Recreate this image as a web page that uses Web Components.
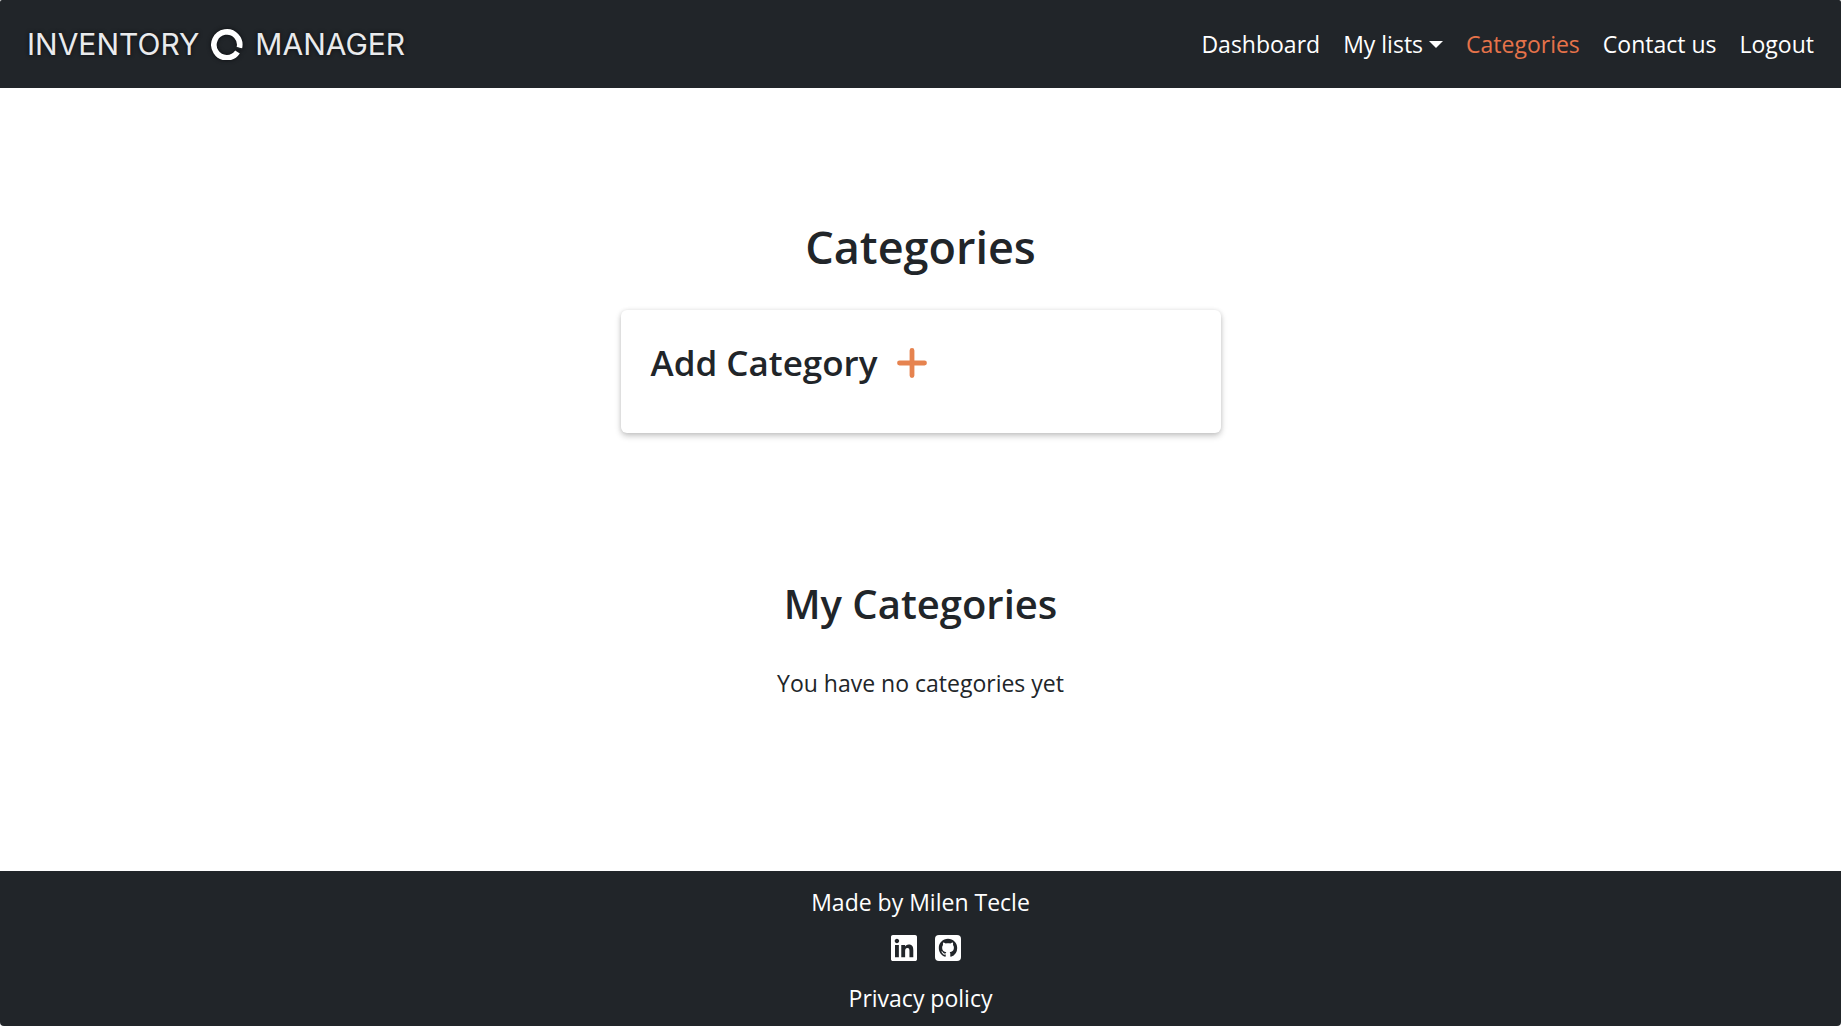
<!DOCTYPE html>
<html lang="en">
<head>
<meta charset="utf-8">
<meta name="viewport" content="width=device-width, initial-scale=1">
<title>Inventory Manager</title>
<style>
  :root { --ink: #212529; --accent: #e6834f; }
  body { margin: 0; background: #fff; color: var(--ink); font: 400 23px/36px "Open Sans", "Noto Sans", sans-serif; }
</style>
</head>
<body>
<inventory-app></inventory-app>
<script>
const define = (name, html) => {
  const template = document.createElement('template');
  template.innerHTML = html;
  customElements.define(name, class extends HTMLElement {
    constructor() {
      super();
      this.attachShadow({ mode: 'open' }).append(template.content.cloneNode(true));
    }
  });
};

define('brand-logo', `
  <style>
    :host { display: block; }
    a { display: flex; align-items: center; gap: 12px; color: #e9eaec; text-decoration: none;
        font: 400 30px/36px Inter, Lato, sans-serif; text-shadow: 0 0 4px #0b0d10; }
    svg { display: block; width: 32px; height: 32px; filter: drop-shadow(0 0 2px #0b0d10); }
  </style>
  <a href="#"><span>INVENTORY</span>
    <svg viewBox="0 0 32 32" aria-hidden="true"><path d="M28.300 20A12.900 12.900 0 1 0 26.500 24" fill="none" stroke="#fff" stroke-width="5.600"/><path d="M24.500 19.500l7 1.700" stroke="#212529" stroke-width="1.400"/></svg>
    <span>MANAGER</span></a>`);

define('nav-link', `
  <style>
    :host { display: block; }
    a { display: flex; align-items: center; gap: 6px; color: #fff; text-decoration: none; }
    :host([active]) a { color: #e6734a; }
    .caret { display: none; border: 7px solid transparent; border-top-color: currentColor; border-bottom: 0; }
    :host([menu]) .caret { display: block; }
  </style>
  <a href="#"><slot></slot><span class="caret"></span></a>`);

define('site-header', `
  <style>
    :host { display: flex; align-items: center; justify-content: space-between; height: 88px;
            padding: 0 27px; background: var(--ink); border-radius: 2px 2px 0 0; }
    nav { display: flex; gap: 23px; }
  </style>
  <brand-logo></brand-logo>
  <nav>
    <nav-link>Dashboard</nav-link><nav-link menu>My lists</nav-link><nav-link active>Categories</nav-link>
    <nav-link>Contact us</nav-link><nav-link>Logout</nav-link>
  </nav>`);

define('add-card', `
  <style>
    :host { display: flex; align-items: center; gap: 20px; box-sizing: border-box; width: 100%; max-width: 600px;
            padding: 32px 30px 49px; border-radius: 6px; background: #fff;
            box-shadow: 0 3px 6px rgba(0,0,0,.22), 0 0 4px rgba(0,0,0,.08); }
    h3 { margin: 0; font-size: 35px; line-height: 42px; font-weight: 600; }
    button { display: block; padding: 0; border: 0; background: none; color: var(--accent); }
    svg { display: block; width: 30px; height: 30px; }
  </style>
  <h3><slot></slot></h3>
  <button aria-label="Add"><svg viewBox="0 0 30 30"><path d="M15 2.500v25M2.500 15h25" stroke="currentColor" stroke-width="4.800" stroke-linecap="round"/></svg></button>`);

define('category-page', `
  <style>
    :host { display: block; }
    main { display: flex; flex-direction: column; align-items: center; padding: 131px 24px 32px; }
    h1, h2, p { margin: 0; text-align: center; }
    h1 { font-size: 45px; line-height: 56px; font-weight: 600; margin-bottom: 35px; }
    h2 { font-size: 40px; line-height: 50px; font-weight: 600; margin: 146px 0 36px; }
  </style>
  <main>
    <h1>Categories</h1>
    <add-card>Add Category</add-card>
    <h2>My Categories</h2>
    <p>You have no categories yet</p>
  </main>`);

define('site-footer', `
  <style>
    :host { display: flex; flex-direction: column; align-items: center; padding: 13px 24px 10px;
            background: var(--ink); color: #fff; border-radius: 0 0 4px 4px; }
    p { margin: 0; }
    a { color: inherit; text-decoration: none; }
    .social { display: flex; gap: 18px; padding: 15px 0 19px 10px; }
    svg { display: block; width: 26px; height: 26px; }
  </style>
  <p>Made by Milen Tecle</p>
  <div class="social">
    <a href="#" aria-label="LinkedIn"><svg viewBox="0 32 448 448"><path fill="currentColor" d="M416 32H31.900C14.300 32 0 46.500 0 64.300v383.400C0 465.500 14.300 480 31.900 480H416c17.600 0 32-14.500 32-32.300V64.300c0-17.800-14.400-32.300-32-32.300zM135.400 416H69V202.200h66.500V416zm-33.200-243c-21.300 0-38.500-17.300-38.500-38.500S80.900 96 102.200 96c21.200 0 38.500 17.300 38.500 38.500 0 21.300-17.200 38.500-38.500 38.500zm282.100 243h-66.400V312c0-24.800-.5-56.700-34.500-56.700-34.600 0-39.900 27-39.900 54.900V416h-66.400V202.200h63.700v29.200h.9c8.900-16.800 30.600-34.500 62.900-34.500 67.200 0 79.700 44.300 79.700 101.900V416z"/></svg></a>
    <a href="#" aria-label="GitHub"><svg viewBox="0 0 26 26"><rect width="26" height="26" rx="4" fill="currentColor"/><g transform="translate(3.800 3.800) scale(1.150)"><path fill="#212529" d="M8 0C3.580 0 0 3.580 0 8c0 3.540 2.290 6.530 5.470 7.590.4.070.55-.17.55-.38 0-.19-.01-.82-.01-1.490-2.010.37-2.530-.49-2.690-.94-.09-.23-.48-.94-.82-1.130-.28-.15-.68-.52-.01-.53.630-.01 1.080.58 1.230.82.72 1.210 1.870.87 2.330.66.07-.52.28-.87.51-1.070-1.780-.2-3.640-.89-3.640-3.950 0-.87.31-1.590.82-2.150-.08-.2-.36-1.020.08-2.120 0 0 .67-.21 2.200.82.640-.18 1.320-.27 2-.27s1.360.09 2 .27c1.530-1.040 2.200-.82 2.200-.82.44 1.100.16 1.920.08 2.120.51.56.82 1.270.82 2.150 0 3.070-1.870 3.750-3.650 3.950.29.25.54.73.54 1.480 0 1.070-.01 1.930-.01 2.200 0 .21.15.46.55.38A8.010 8.010 0 0 0 16 8c0-4.420-3.580-8-8-8z"/></g></svg></a>
  </div>
  <a href="#">Privacy policy</a>`);

define('inventory-app', `
  <style>
    :host { display: flex; flex-direction: column; min-height: 100vh; }
    category-page { flex: 1; }
  </style>
  <site-header></site-header>
  <category-page></category-page>
  <site-footer></site-footer>`);
</script>
</body>
</html>
